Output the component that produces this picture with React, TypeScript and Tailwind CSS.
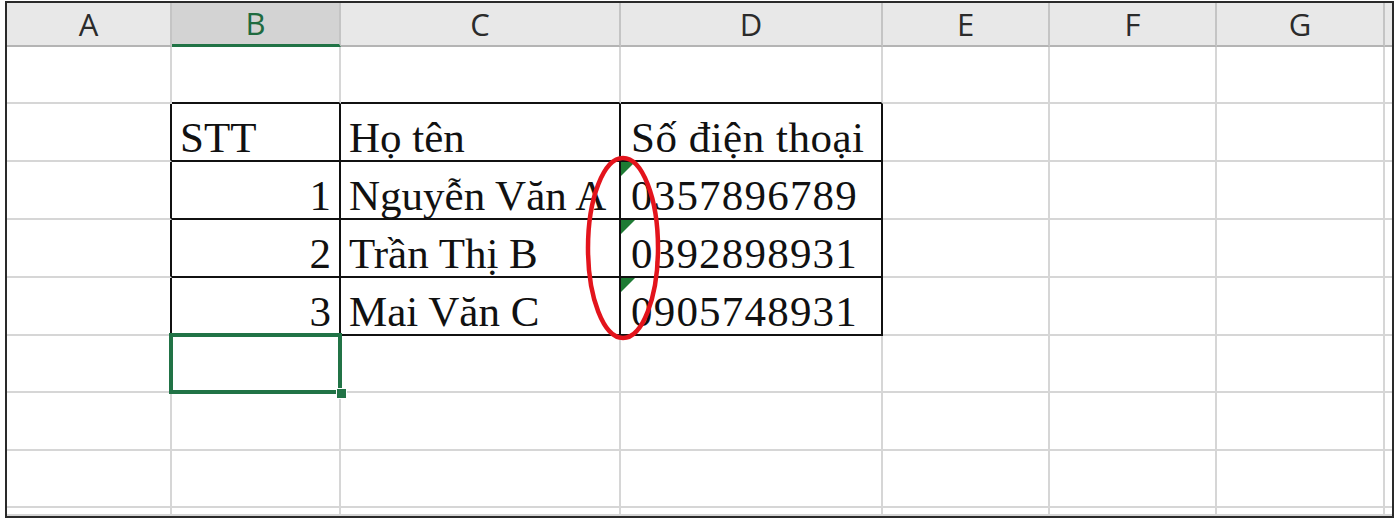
import React from 'react';

const COLS = ['A', 'B', 'C', 'D', 'E', 'F', 'G', ''];
const COL_W = [165, 169, 280, 262, 167, 167, 168, 7];
const ROW_H = [57, 58, 58, 58, 58, 57, 58, 57, 8];

const TABLE: Record<string, string> = {
  '1-1': 'STT',
  '1-2': 'Họ tên',
  '1-3': 'Số điện thoại',
  '2-1': '1',
  '2-2': 'Nguyễn Văn A',
  '2-3': '0357896789',
  '3-1': '2',
  '3-2': 'Trần Thị B',
  '3-3': '0392898931',
  '4-1': '3',
  '4-2': 'Mai Văn C',
  '4-3': '0905748931',
};

const inTable = (r: number, c: number) => r >= 1 && r <= 4 && c >= 1 && c <= 3;

function Cell({ r, c }: { r: number; c: number }) {
  const text = TABLE[`${r}-${c}`];
  const blackRight = inTable(r, c) || inTable(r, c + 1);
  const blackBottom = inTable(r, c) || inTable(r + 1, c);
  const rightAlign = c === 1 && r >= 2;
  const textCell = c === 3 && r >= 2 && r <= 4;
  const selected = r === 5 && c === 1;
  const last = c === COLS.length - 1;

  return (
    <div
      className={`relative flex items-end px-[8px] pb-[1px] font-['Liberation_Serif',serif] text-[43px] leading-none text-[#111] whitespace-nowrap ${
        rightAlign ? 'justify-end' : 'justify-start'
      } ${textCell ? 'tracking-[1.2px] pl-[10px]' : ''} ${c === 3 && r === 1 ? 'tracking-[0.5px] pl-[10px]' : ''} ${
        selected ? 'z-10' : ''
      } ${last ? '' : 'border-r-2'} ${blackRight ? 'border-r-[#111]' : 'border-r-[#d6d6d6]'} border-b-2 ${
        blackBottom ? 'border-b-[#111]' : 'border-b-[#d6d6d6]'
      }`}
    >
      {text}
      {textCell && (
        <div className="absolute left-0 top-0 w-0 h-0 border-t-[14px] border-t-[#1e7b34] border-r-[14px] border-r-transparent" />
      )}
      {selected && (
        <>
          <div className="absolute left-[-3px] top-[-3px] right-[-3px] bottom-[-3px] border-[4px] border-[#217346]" />
          <div className="absolute right-[-8px] bottom-[-8px] w-[11px] h-[11px] bg-[#217346] border border-white" />
        </>
      )}
    </div>
  );
}

export default function App() {
  return (
    <div className="relative w-[1400px] h-[524px] bg-white overflow-hidden">
      <div className="ml-[5px] mt-[1px] w-[1389px] h-[517px] border-2 border-[#2a2a2a] overflow-hidden">
        <div
          className="grid"
          style={{
            gridTemplateColumns: COL_W.map((w) => `${w}px`).join(' '),
            gridTemplateRows: `44px ${ROW_H.map((h) => `${h}px`).join(' ')}`,
          }}
        >
          {COLS.map((name, c) => (
            <div
              key={name + c}
              className={`flex items-center justify-center font-['Open_Sans',sans-serif] text-[31px] ${
                c === 1
                  ? 'bg-[#d3d3d3] text-[#1f6b40] border-b-[3px] border-b-[#217346]'
                  : 'bg-[#e8e8e8] text-[#2b2b2b] border-b-2 border-b-[#b4b4b4]'
              } ${c === COLS.length - 1 ? '' : 'border-r-2 border-r-[#c4c4c4]'}`}
            >
              {name}
            </div>
          ))}
          {ROW_H.map((_, r) => COLS.map((_, c) => <Cell key={`${r}-${c}`} r={r} c={c} />))}
        </div>
      </div>
      <svg className="absolute left-0 top-0 pointer-events-none" width="1400" height="524">
        <ellipse cx="623" cy="248" rx="35" ry="90" fill="none" stroke="#e3141c" strokeWidth="4.5" />
      </svg>
    </div>
  );
}
